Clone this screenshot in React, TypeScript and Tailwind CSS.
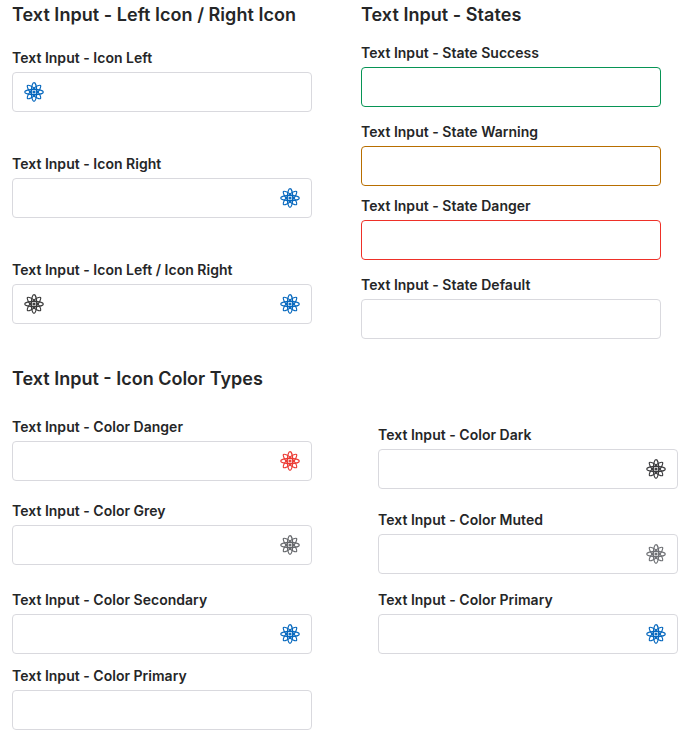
import React from "react";

function Atom({ className }: { className: string }) {
  return (
    <svg viewBox="0 0 20 20" className={"h-5 w-5 shrink-0 " + className} fill="none" stroke="currentColor" strokeWidth="1.2" strokeLinejoin="round">
      <ellipse cx="10" cy="10" rx="2.7" ry="9.3" />
      <ellipse cx="10" cy="10" rx="9.3" ry="2.7" />
      <path d="M3.4 3.4C4.5 2.7 8.7 4.4 12.1 7.9C15.6 11.3 17.3 15.5 16.6 16.6C15.5 17.3 11.3 15.6 7.9 12.1C4.4 8.7 2.7 4.5 3.4 3.4Z" />
      <path d="M16.6 3.4C15.5 2.7 11.3 4.4 7.9 7.9C4.4 11.3 2.7 15.5 3.4 16.6C4.5 17.3 8.7 15.6 12.1 12.1C15.6 8.7 17.3 4.5 16.6 3.4Z" />
      <circle cx="10" cy="10" r="1" fill="currentColor" />
    </svg>
  );
}

function Field({ label, left, right, border = "border-[#d9d9de]", className = "" }: {
  label: string;
  left?: string;
  right?: string;
  border?: string;
  className?: string;
}) {
  return (
    <div className={"w-[300px] " + className}>
      <div className="h-6 text-sm leading-5 font-semibold tracking-[0.02px]">{label}</div>
      <div className={"flex h-10 items-center rounded border bg-white px-[11px] " + border}>
        {left && <Atom className={left} />}
        {right && <Atom className={"ml-auto " + right} />}
      </div>
    </div>
  );
}

export default function App() {
  return (
    <main className="h-[730px] w-[678px] overflow-hidden bg-white font-['Inter',sans-serif] text-[#252627]">
      <div className="flex h-[364px] gap-[49px] pl-3">
        <section className="w-[300px]">
          <h2 className="h-12 pt-0.5 text-lg leading-[26px] font-semibold tracking-[0.04px]">Text Input - Left Icon / Right Icon</h2>
          <Field label="Text Input - Icon Left" left="text-[#0768be]" />
          <Field label="Text Input - Icon Right" right="text-[#0768be]" className="mt-[42px]" />
          <Field label="Text Input - Icon Left / Icon Right" left="text-[#3c3c3c]" right="text-[#0768be]" className="mt-[42px]" />
        </section>
        <section className="w-[300px]">
          <h2 className="h-[43px] pt-0.5 text-lg leading-[26px] font-semibold tracking-[0.05px]">Text Input - States</h2>
          <Field label="Text Input - State Success" border="border-[#079455]" />
          <Field label="Text Input - State Warning" border="border-[#b86e00]" className="mt-[15px]" />
          <Field label="Text Input - State Danger" border="border-[#ee3028]" className="mt-[10px]" />
          <Field label="Text Input - State Default" className="mt-[15px]" />
        </section>
      </div>
      <h2 className="h-[53px] pt-0.5 pl-3 text-lg leading-[26px] font-semibold">Text Input - Icon Color Types</h2>
      <div className="flex gap-[66px] pl-3">
        <section>
          <Field label="Text Input - Color Danger" right="text-[#ec3c35]" />
          <Field label="Text Input - Color Grey" right="text-[#66686c]" className="mt-5" />
          <Field label="Text Input - Color Secondary" right="text-[#0768be]" className="mt-[25px]" />
          <Field label="Text Input - Color Primary" className="mt-3" />
        </section>
        <section className="pt-2">
          <Field label="Text Input - Color Dark" right="text-[#3c3c3f]" />
          <Field label="Text Input - Color Muted" right="text-[#707276]" className="mt-[21px]" />
          <Field label="Text Input - Color Primary" right="text-[#0768be]" className="mt-4" />
        </section>
      </div>
    </main>
  );
}
